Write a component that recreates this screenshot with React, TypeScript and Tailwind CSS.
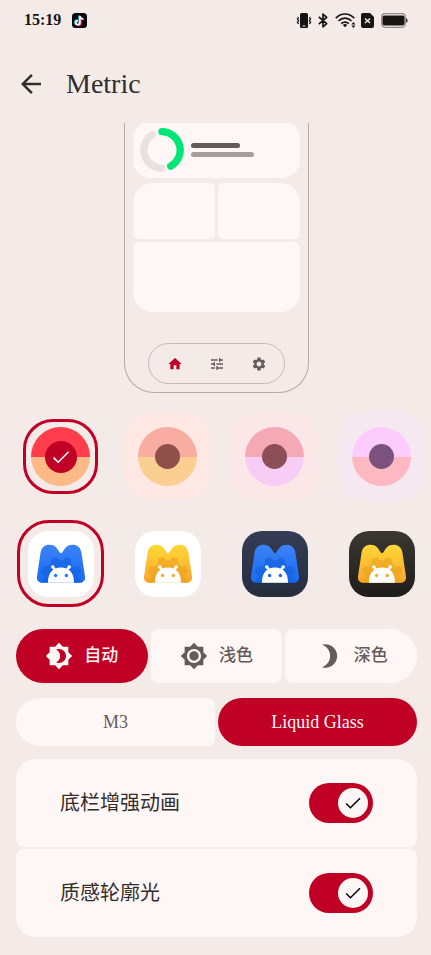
import { useState } from "react";
import {
  MdArrowBack,
  MdBrightness3,
  MdBrightness4,
  MdBrightness7,
  MdHome,
  MdSettings,
  MdTune,
} from "react-icons/md";

const swatches = [
  { name: "Red", card: "bg-[#f4ebe9]", top: "bg-[#ff3d4d]", bottom: "bg-[#ffb987]", dot: "bg-[#c00025]" },
  { name: "Coral", card: "bg-[#fde8e4]", top: "bg-[#f9aca1]", bottom: "bg-[#facf91]", dot: "bg-[#8e5048]" },
  { name: "Rose", card: "bg-[#fce7e8]", top: "bg-[#f5a9b4]", bottom: "bg-[#f7cdf6]", dot: "bg-[#8c4e57]" },
  { name: "Violet", card: "bg-[#f5e8f1]", top: "bg-[#fdccfe]", bottom: "bg-[#feb8c2]", dot: "bg-[#7b527e]" },
];

const launcherIcons = [
  { id: "blue-light", bg: ["#ffffff", "#ffffff"], fill: ["#3b82f6", "#1b6cf2"], gear: "#1260dd", eye: "#2b78f5" },
  { id: "gold-light", bg: ["#ffffff", "#ffffff"], fill: ["#fdd835", "#fba52f"], gear: "#e9a21f", eye: "#f9ab2e" },
  { id: "blue-dark", bg: ["#333c54", "#262d3d"], fill: ["#3b82f6", "#1b6cf2"], gear: "#1260dd", eye: "#1f68e0" },
  { id: "gold-dark", bg: ["#3b3833", "#1e1d1a"], fill: ["#fdd835", "#fba52f"], gear: "#e9a21f", eye: "#f9ab2e" },
];

const themes = [
  { label: "自动", Icon: MdBrightness4 },
  { label: "浅色", Icon: MdBrightness7 },
  { label: "深色", Icon: MdBrightness3 },
];

const styles = ["M3", "Liquid Glass"];

function segmentShape(index: number, count: number, selected: boolean) {
  if (selected) return "rounded-[27px] bg-[#c00025] text-[#fff7f6]";
  if (index === 0) return "rounded-l-[27px] rounded-r-lg bg-[#fff7f6] text-[#625b5a]";
  if (index === count - 1) return "rounded-l-lg rounded-r-[27px] bg-[#fff7f6] text-[#625b5a]";
  return "rounded-lg bg-[#fff7f6] text-[#625b5a]";
}

function Check({ className }: { className: string }) {
  return (
    <svg viewBox="0 0 24 24" className={className} fill="none" stroke="currentColor" strokeWidth="1.6">
      <path d="M4.6 12.6 9.2 17.2 19.6 6.8" />
    </svg>
  );
}

function StatusBar() {
  return (
    <div className="flex h-10 items-center pr-[23px] pl-6 text-[#161514]">
      <span className="text-base font-bold">15:19</span>
      <svg viewBox="0 0 15 15" className="ml-[11px] size-[15px]">
        <rect width="15" height="15" rx="3.5" fill="#07060f" />
        <g fill="none" strokeWidth="1.7">
          <path d="M7.2 2.4v6.800a2.100 2.100 0 1 1-2.100-2.100M7.200 2.600c.2 1.600 1.300 2.700 3.300 2.900" stroke="#25f4ee" />
          <path d="M8.800 3.500v6.800a2.100 2.100 0 1 1-2.100-2.100M8.800 3.700c.2 1.600 1.300 2.700 3.300 2.900" stroke="#fe2c55" />
          <path d="M8 2.900v6.800a2.100 2.100 0 1 1-2.100-2.100M8 3.100c.2 1.600 1.300 2.700 3.200 2.900" stroke="#fff" strokeWidth="1.300" />
        </g>
      </svg>
      <div className="ml-auto flex items-center">
        <svg viewBox="0 0 16 15" className="h-[15px] w-4">
          <rect x="4" y="0" width="8" height="15" rx="1.5" fill="currentColor" />
          <path d="M6.6 13h2.800" stroke="#f4ebe9" strokeWidth="1" />
          <path
            d="M2.600 4.200 1.400 5.900l1.200 1.600-1.200 1.700 1.200 1.700M13.400 4.200l1.200 1.700-1.200 1.600 1.200 1.700-1.200 1.700"
            fill="none"
            stroke="currentColor"
            strokeWidth="1.300"
          />
        </svg>
        <svg
          viewBox="0 0 10 15"
          className="ml-[6px] h-[15px] w-[10px]"
          fill="none"
          stroke="currentColor"
          strokeWidth="1.700"
          strokeLinejoin="round"
        >
          <path d="M.8 3.900 8.700 10.700 5 13.800V1.200l3.700 3.100L.8 11.100" />
        </svg>
        <svg viewBox="0 0 21 15" className="ml-[7px] h-[15px] w-[21px]">
          <g fill="none" stroke="currentColor" strokeWidth="1.7">
            <path d="M.8 5.2C6-.4 14-.4 19.2 5.2" />
            <path d="M3.5 8c3.800-3.800 9.200-3.800 13 0" />
            <path d="M6.200 10.700c2.200-2.200 5.400-2.200 7.600 0" />
          </g>
          <path d="M10 14.200 7.800 12c1.200-1.200 3.200-1.200 4.400 0z" fill="currentColor" />
          <path d="m18.400 9 2 2.500h-4zM18.400 15l2-2.500h-4z" fill="currentColor" />
        </svg>
        <svg viewBox="0 0 13 15" className="ml-[5px] h-[15px] w-[13px]">
          <path d="M2 0h7l4 4v9a2 2 0 0 1-2 2H2a2 2 0 0 1-2-2V2a2 2 0 0 1 2-2z" fill="currentColor" />
          <path d="m4 5.500 5 4.500M9 5.500 4 10" stroke="#f4ebe9" strokeWidth="1.500" />
        </svg>
        <svg viewBox="0 0 27 15" className="ml-[7px] h-[15px] w-[27px]">
          <rect x=".7" y=".7" width="23.600" height="13.600" rx="3.500" fill="none" stroke="#8f8a89" strokeWidth="1.200" />
          <rect x="1.500" y="2.500" width="22" height="10" rx="2" fill="currentColor" />
          <path d="M25.200 5a3 3 0 0 1 0 5z" fill="currentColor" />
        </svg>
      </div>
    </div>
  );
}

function PhonePreview() {
  return (
    <div className="mx-auto flex h-[270px] w-[185px] flex-col overflow-hidden rounded-b-[30px] border border-t-0 border-[#b3aaa9] px-2">
      <div className="-mt-0.5 flex h-[57px] shrink-0 items-center gap-[7px] rounded-[18px] bg-[#fff7f6] pl-[7px]">
        <svg viewBox="0 0 44 44" className="size-11" fill="none" strokeWidth="7.300" strokeLinecap="round">
          <path d="M21.300 40.300A18.400 18.400 0 0 1 12.300 6.500" stroke="#e9e1df" />
          <path d="M22 3.700A18.400 18.400 0 0 1 30.700 38.200" stroke="#00e676" />
        </svg>
        <div className="flex flex-col gap-1">
          <div className="h-[5px] w-[49px] rounded-full bg-[#615b5b]" />
          <div className="h-[5px] w-[63px] rounded-full bg-[#a59e9d]" />
        </div>
      </div>
      <div className="mt-[5px] grid shrink-0 grid-cols-2 gap-[3px]">
        <div className="h-14 rounded-md rounded-tl-[20px] bg-[#fff7f6]" />
        <div className="h-14 rounded-md rounded-tr-[20px] bg-[#fff7f6]" />
        <div className="col-span-2 h-[70px] rounded-t-md rounded-b-[20px] bg-[#fff7f6]" />
      </div>
      <div className="mx-auto mt-[31px] flex h-[41px] w-[137px] shrink-0 items-center justify-center gap-[26px] rounded-full border border-[#c5bbba] text-[#625b5a]">
        <MdHome className="size-4 text-[#c00025]" />
        <MdTune className="size-4" />
        <MdSettings className="size-4" />
      </div>
    </div>
  );
}

function LauncherIcon({ icon }: { icon: (typeof launcherIcons)[number] }) {
  const m =
    "M9 45.500 12.600 21.500C13.500 16.200 17 13.700 21.500 13.700 26.500 13.700 29 16.500 31.200 20.800 32.200 22.700 33.800 22.700 34.800 20.800 37 16.500 39.500 13.700 44.500 13.700 49 13.700 52.500 16.200 53.400 21.500L57 45.500C57.500 49.400 55 51.700 52 51.700H14C11 51.700 8.500 49.400 9 45.500Z";
  return (
    <svg viewBox="0 0 66 66" className="size-[66px]">
      <defs>
        <linearGradient id={`${icon.id}-bg`} x2="0" y2="1">
          <stop stopColor={icon.bg[0]} />
          <stop offset="1" stopColor={icon.bg[1]} />
        </linearGradient>
        <linearGradient id={`${icon.id}-m`} x2="0" y2="1">
          <stop stopColor={icon.fill[0]} />
          <stop offset="1" stopColor={icon.fill[1]} />
        </linearGradient>
        <clipPath id={`${icon.id}-clip`}>
          <path d={m} />
        </clipPath>
      </defs>
      <rect width="66" height="66" rx="20" fill={`url(#${icon.id}-bg)`} />
      <path d={m} fill={`url(#${icon.id}-m)`} />
      <g clipPath={`url(#${icon.id}-clip)`}>
        <path
          d="M24 28l4.500-1 1.500 2.500q3 1.500 6 0l1.500-2.500 4.500 1 .5 5 3 3.500 5-.5 2 4.500-3 3v4l4 4H12.500l4-4v-4l-3-3 2-4.500 5 .5 3-3.500z"
          fill={icon.gear}
          stroke={icon.gear}
          strokeWidth="1.500"
          strokeLinejoin="round"
          opacity=".6"
        />
      </g>
      <path
        d="M20 51.700C20 46 21.500 41.500 25.500 38.500L23.500 36.200 25.500 35 27.500 37.400C31 36.200 35 36.200 38.500 37.400L40.500 35 42.500 36.200 40.500 38.500C44.500 41.500 46 46 46 51.700Z"
        fill="#fff"
      />
      <circle cx="24.800" cy="36" r="1.800" fill="#fff" />
      <circle cx="41.200" cy="36" r="1.800" fill="#fff" />
      <circle cx="27.600" cy="44.500" r="1.700" fill={icon.eye} />
      <circle cx="38.400" cy="44.500" r="1.700" fill={icon.eye} />
    </svg>
  );
}

function SwitchRow({ label, shape }: { label: string; shape: string }) {
  const [on, setOn] = useState(true);
  return (
    <label className={`flex h-22 items-center justify-between bg-[#fff7f6] px-11 ${shape}`}>
      <span className="text-xl text-[#322c2b]">{label}</span>
      <span className="relative flex">
        <input
          type="checkbox"
          role="switch"
          checked={on}
          onChange={() => setOn(!on)}
          className="h-10 w-16 appearance-none rounded-full bg-[#d8cfce] checked:bg-[#c00025]"
        />
        <span
          className={`pointer-events-none absolute top-[5px] flex size-[30px] items-center justify-center rounded-full bg-[#fff7f6] text-black ${on ? "right-[5px]" : "left-[5px]"}`}
        >
          {on && <Check className="size-[22px]" />}
        </span>
      </span>
    </label>
  );
}

export default function App() {
  const [color, setColor] = useState(0);
  const [launcher, setLauncher] = useState(0);
  const [theme, setTheme] = useState(0);
  const [style, setStyle] = useState(1);

  return (
    <div className="min-h-screen overflow-hidden bg-[#f4ebe9] pb-[18px] font-['Liberation_Serif','Noto_Sans_CJK_SC',serif]">
      <StatusBar />
      <header className="flex h-[83px] items-center gap-5 pt-1 pl-4 text-[#322c2b]">
        <button type="button" aria-label="Back">
          <MdArrowBack className="size-[30px]" />
        </button>
        <h1 className="text-[28px] leading-9">Metric</h1>
      </header>

      <main className="pr-[14px] pl-4">
        <PhonePreview />

        <div className="-mr-[14px] mt-5 flex gap-5 overflow-hidden pl-px">
          {swatches.map((s, i) => (
            <button
              key={s.name}
              type="button"
              aria-label={s.name}
              aria-pressed={color === i}
              onClick={() => setColor(i)}
              className={`flex size-[87px] shrink-0 items-center justify-center rounded-[26px] ${color === i ? "" : s.card}`}
            >
              <span
                className={`flex size-[75px] items-center justify-center rounded-[30px] ${color === i ? "border-[3px] border-[#c00025]" : ""}`}
              >
                <span className="grid size-[59px] shrink-0 overflow-hidden rounded-full">
                  <span className={`col-start-1 row-start-1 ${s.top}`} />
                  <span className={`col-start-1 row-start-2 ${s.bottom}`} />
                  <span
                    className={`col-start-1 row-span-2 row-start-1 flex items-center justify-center place-self-center rounded-full text-white ${s.dot} ${color === i ? "size-8" : "size-[25px]"}`}
                  >
                    {color === i && <Check className="size-6" />}
                  </span>
                </span>
              </span>
            </button>
          ))}
        </div>

        <div className="-mr-[14px] mt-5 flex gap-5 overflow-hidden pl-px">
          {launcherIcons.map((icon, i) => (
            <button
              key={icon.id}
              type="button"
              aria-label={icon.id}
              aria-pressed={launcher === i}
              onClick={() => setLauncher(i)}
              className={`flex size-[87px] shrink-0 items-center justify-center rounded-[32px] ${launcher === i ? "border-[3px] border-[#c00025]" : ""}`}
            >
              <LauncherIcon icon={icon} />
            </button>
          ))}
        </div>

        <div className="mt-[22px] grid grid-cols-3 gap-[3px]">
          {themes.map(({ label, Icon }, i) => (
            <button
              key={label}
              type="button"
              aria-pressed={theme === i}
              onClick={() => setTheme(i)}
              className={`flex h-[54px] items-center justify-center gap-[11px] text-[17px] font-medium ${segmentShape(i, 3, theme === i)}`}
            >
              <Icon className="size-7" />
              {label}
            </button>
          ))}
        </div>

        <div className="mt-[15px] grid grid-cols-2 gap-[3px]">
          {styles.map((label, i) => (
            <button
              key={label}
              type="button"
              aria-pressed={style === i}
              onClick={() => setStyle(i)}
              className={`h-12 text-lg ${segmentShape(i, 2, style === i)}`}
            >
              {label}
            </button>
          ))}
        </div>

        <div className="mt-[13px] flex flex-col gap-0.5">
          <SwitchRow label="底栏增强动画" shape="rounded-t-[20px] rounded-b-lg" />
          <SwitchRow label="质感轮廓光" shape="rounded-t-lg rounded-b-[20px]" />
        </div>
      </main>
    </div>
  );
}
